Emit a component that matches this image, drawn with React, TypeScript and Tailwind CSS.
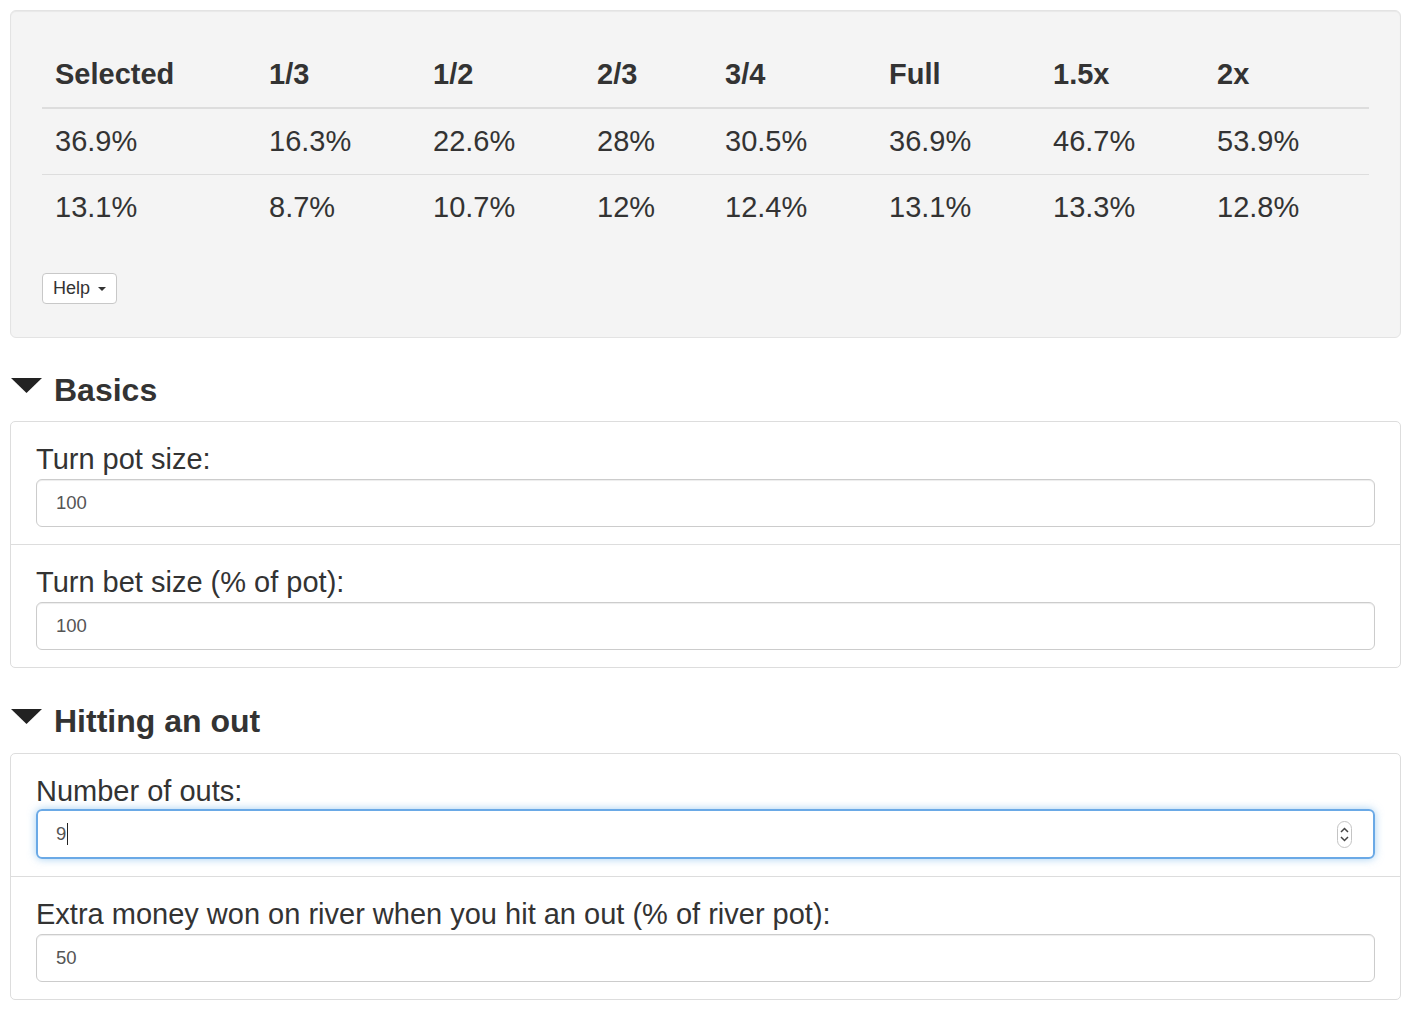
import React from 'react';

const cols = ['Selected', '1/3', '1/2', '2/3', '3/4', 'Full', '1.5x', '2x'];
const widths = ['w-[214px]', 'w-[164px]', 'w-[164px]', 'w-[128px]', 'w-[164px]', 'w-[164px]', 'w-[164px]', 'w-auto'];

const rows = [
  ['36.9%', '16.3%', '22.6%', '28%', '30.5%', '36.9%', '46.7%', '53.9%'],
  ['13.1%', '8.7%', '10.7%', '12%', '12.4%', '13.1%', '13.3%', '12.8%'],
];

export default function App() {
  return (
    <div className="min-h-[1028px] bg-white pl-[10px] pr-[15px] pt-[10px] text-[#333] font-['Liberation_Sans',Arial,sans-serif]">
      {/* Results well */}
      <div className="rounded-[6px] border border-[#e3e3e3] bg-[#f4f4f4] px-[31px] pt-[32px] pb-[33px] shadow-[inset_0_1px_1px_rgba(0,0,0,0.05)]">
        <table className="w-full border-collapse text-[29px]">
          <thead>
            <tr className="border-b-2 border-[#dddddd]">
              {cols.map((c, i) => (
                <th key={c} className={`${widths[i]} h-[65px] pl-[13px] text-left align-middle font-bold`}>{c}</th>
              ))}
            </tr>
          </thead>
          <tbody>
            {rows.map((r, ri) => (
              <tr key={ri} className={ri > 0 ? 'border-t border-[#dddddd]' : ''}>
                {r.map((v, i) => (
                  <td key={i} className="h-[66px] pl-[13px] align-middle">{v}</td>
                ))}
              </tr>
            ))}
          </tbody>
        </table>
        <button className="mt-[33px] flex h-[31px] items-center gap-[8px] rounded-[4px] border border-[#c8c8c8] bg-white px-[10px] text-[18px] text-[#333]">
          Help
          <span className="h-0 w-0 border-x-[4px] border-t-[4px] border-x-transparent border-t-[#333]" />
        </button>
      </div>

      <Section title="Basics" first>
        <Field label="Turn pot size:" value="100" />
        <Field label="Turn bet size (% of pot):" value="100" divider />
      </Section>

      <Section title="Hitting an out">
        <Field label="Number of outs:" value="9" focused />
        <Field label="Extra money won on river when you hit an out (% of river pot):" value="50" divider />
      </Section>
    </div>
  );
}

function Section({ title, first, children }: { title: string; first?: boolean; children: React.ReactNode }) {
  return (
    <div>
      <div className={`flex h-[44px] items-center gap-[12px] pl-[1px] ${first ? 'mt-[30px] mb-[9px]' : 'mt-[31px] mb-[10px]'}`}>
        <svg width="31" height="15" viewBox="0 0 31 15" className="mb-[10px]">
          <polygon points="0,0 31,0 15.5,15" fill="#222" />
        </svg>
        <h4 className="text-[32px] font-bold leading-[44px] text-[#333]">{title}</h4>
      </div>
      <div className="rounded-[5px] border border-[#dddddd] bg-white">{children}</div>
    </div>
  );
}

function Field({ label, value, divider, focused }: { label: string; value: string; divider?: boolean; focused?: boolean }) {
  return (
    <div className={`px-[25px] pt-[17px] pb-[17px] ${divider ? 'border-t border-[#dddddd]' : ''}`}>
      <div className="h-[40px] text-[29px] leading-[40px] text-[#333]">{label}</div>
      {focused ? (
        <div className="relative -mt-[2px] flex h-[50px] items-center rounded-[6px] border-2 border-[#6aa9e6] pl-[18px] text-[18.5px] text-[#555] shadow-[0_0_8px_rgba(102,175,233,0.6)]">
          <span>{value}</span>
          <span className="ml-[1px] h-[22px] w-px bg-[#222]" />
          <div className="absolute right-[21px] top-[10px] flex h-[27px] w-[15px] flex-col items-center justify-center gap-[3px] rounded-full border border-[#c4c4c4] bg-white">
            <svg width="9" height="6" viewBox="0 0 9 6"><polyline points="1,5 4.5,1.5 8,5" fill="none" stroke="#444" strokeWidth="1.5" /></svg>
            <svg width="9" height="6" viewBox="0 0 9 6"><polyline points="1,1 4.5,4.5 8,1" fill="none" stroke="#444" strokeWidth="1.5" /></svg>
          </div>
        </div>
      ) : (
        <input
          readOnly
          value={value}
          className="block h-[48px] w-full rounded-[6px] border border-[#cccccc] bg-white px-[19px] text-[18.5px] text-[#555] shadow-[inset_0_1px_1px_rgba(0,0,0,0.075)] outline-none font-['Liberation_Sans',Arial,sans-serif]"
        />
      )}
    </div>
  );
}
